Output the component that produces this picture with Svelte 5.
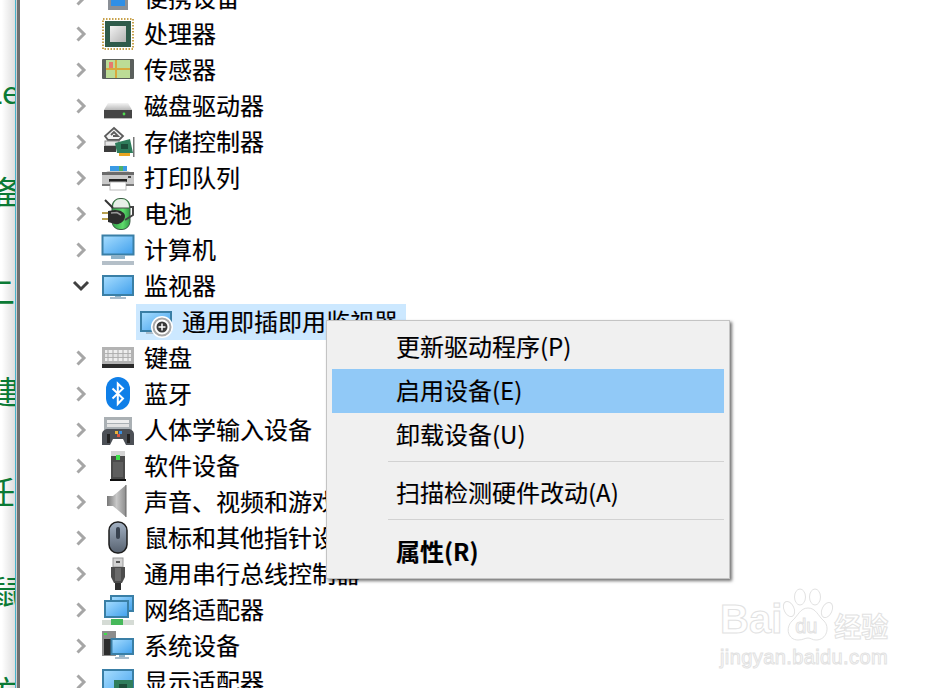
<script>
  const devices = [
    { name: '便携设备', icon: 'portable' },
    { name: '处理器', icon: 'cpu' },
    { name: '传感器', icon: 'sensor' },
    { name: '磁盘驱动器', icon: 'disk' },
    { name: '存储控制器', icon: 'storage' },
    { name: '打印队列', icon: 'printer' },
    { name: '电池', icon: 'battery' },
    { name: '计算机', icon: 'computer' },
    { name: '监视器', icon: 'monitor', open: true, child: '通用即插即用监视器' },
    { name: '键盘', icon: 'keyboard' },
    { name: '蓝牙', icon: 'bluetooth' },
    { name: '人体学输入设备', icon: 'hid' },
    { name: '软件设备', icon: 'software' },
    { name: '声音、视频和游戏控制器', icon: 'speaker' },
    { name: '鼠标和其他指针设备', icon: 'mouse' },
    { name: '通用串行总线控制器', icon: 'usb' },
    { name: '网络适配器', icon: 'network' },
    { name: '系统设备', icon: 'system' },
    { name: '显示适配器', icon: 'display' }
  ];

  // text of the window behind, only a sliver of it shows
  const behind = [
    { text: 'Le', shift: -15 },
    { text: '备', shift: -8 },
    { text: '二', shift: -17 },
    { text: '建', shift: -12 },
    { text: '任', shift: -17 },
    { text: '鼠', shift: -10 },
    { text: '方', shift: -10 }
  ];
</script>

<svg class="defs" width="0" height="0" aria-hidden="true">
  <defs>
    <linearGradient id="screen" x1="0" y1="0" x2="1" y2="1">
      <stop offset="0" stop-color="#a8deff" />
      <stop offset="1" stop-color="#3f9fec" />
    </linearGradient>
    <linearGradient id="chipface" x1="0" y1="0" x2="1" y2="1">
      <stop offset="0" stop-color="#f2f2f2" />
      <stop offset="1" stop-color="#b4b4b4" />
    </linearGradient>
    <linearGradient id="metal" x1="0" y1="0" x2="0" y2="1">
      <stop offset="0" stop-color="#f4f4f4" />
      <stop offset="1" stop-color="#b8b8b8" />
    </linearGradient>
    <linearGradient id="cone" x1="0" y1="0" x2="1" y2="0">
      <stop offset="0" stop-color="#777" />
      <stop offset="0.5" stop-color="#c8c8c8" />
      <stop offset="1" stop-color="#8c8c8c" />
    </linearGradient>
    <linearGradient id="mousebody" x1="0" y1="0" x2="0" y2="1">
      <stop offset="0" stop-color="#a4b2c4" />
      <stop offset="1" stop-color="#56616f" />
    </linearGradient>
    <linearGradient id="charge" x1="0" y1="0" x2="1" y2="0">
      <stop offset="0" stop-color="#2f9a45" />
      <stop offset="0.6" stop-color="#5fdc6c" />
      <stop offset="1" stop-color="#2f9a45" />
    </linearGradient>
  </defs>
</svg>

{#snippet icon(kind)}
  <svg class="icon" viewBox="0 0 32 32" width="32" height="32" aria-hidden="true">
    {#if kind === 'portable'}
      <rect x="6" y="14" width="20" height="14" fill="#8a8f96" />
      <rect x="9" y="17" width="14" height="7" fill="#2f8fe6" />
    {:else if kind === 'cpu'}
      <rect x="1" y="1" width="30" height="30" fill="none" stroke="#c8a24c" stroke-width="2" stroke-dasharray="1.5 1.5" />
      <rect x="3" y="3" width="26" height="26" fill="#2f5b4b" />
      <rect x="8" y="8" width="16" height="16" fill="url(#chipface)" />
    {:else if kind === 'sensor'}
      <rect x="0" y="5" width="32" height="20" rx="1" fill="#5a5f5c" />
      <rect x="4" y="6" width="24" height="18" fill="#bcdc96" />
      <rect x="13" y="6" width="2" height="18" fill="#d8a83c" />
      <rect x="4" y="14" width="24" height="2" fill="#d8a83c" />
      <rect x="7" y="8" width="4" height="6" fill="#e8796f" />
    {:else if kind === 'disk'}
      <path d="M6 13H26L30 20H2Z" fill="url(#metal)" />
      <rect x="2" y="20" width="28" height="8" fill="#454545" />
      <rect x="2" y="28" width="28" height="1" fill="#bbb" />
      <circle cx="22" cy="24" r="1.4" fill="#4fdc4f" />
    {:else if kind === 'storage'}
      <path d="M12 2L21 10L17 14H6L3 10Z" fill="#f4f4f4" stroke="#5c5c5c" stroke-width="1.8" />
      <path d="M9 9L12 6L16 10H11" fill="none" stroke="#5c5c5c" stroke-width="1.8" />
      <rect x="3" y="15" width="14" height="5" fill="#e6e6e6" stroke="#8a8a8a" />
      <rect x="2" y="20" width="12" height="6" fill="#3c3c3c" />
      <path d="M13 17L28 13L31 27H15Z" fill="#2f7d5c" />
      <rect x="19" y="18" width="7" height="5" fill="#1d4d3a" />
      <rect x="17" y="27" width="11" height="3" fill="#eaa520" />
      <rect x="31" y="11" width="1.5" height="20" fill="#777" />
    {:else if kind === 'printer'}
      <rect x="8" y="4" width="17" height="5" fill="#3a9ae4" />
      <rect x="17" y="4" width="4" height="5" fill="#4fb06a" />
      <path d="M6 9H26L32 12V24H0V12Z" fill="#c9c9c9" />
      <rect x="0" y="10" width="32" height="3" fill="#6b6b6b" />
      <rect x="26" y="14" width="3" height="2" fill="#4a4a4a" />
      <rect x="7" y="17" width="18" height="3" fill="#222" />
      <rect x="8" y="20" width="16" height="8" fill="#fff" stroke="#bbb" />
      <rect x="0" y="22" width="8" height="2" fill="#777" />
      <rect x="24" y="22" width="8" height="2" fill="#777" />
    {:else if kind === 'battery'}
      <rect x="10" y="0.5" width="18" height="31" rx="8" fill="url(#charge)" stroke="#3c5a44" stroke-width="1" />
      <path d="M11 10C11 4 14 1 19 1C24 1 27 4 27 10Z" fill="#e8efe8" />
      <path d="M11 10H27" stroke="#4a4a4a" stroke-width="1" />
      <path d="M3 2L11 10" stroke="#333" stroke-width="2" fill="none" />
      <path d="M28 9H31V17L23 22" stroke="#444" stroke-width="2" fill="none" />
      <rect x="0" y="14" width="7" height="2" fill="#b8a050" />
      <rect x="0" y="20" width="7" height="2" fill="#b8a050" />
      <path d="M6 13L13 12C19 12 23 15 23 18C23 22 19 27 13 26L6 24Z" fill="#2c2c2c" />
      <path d="M9 15L15 14.5L19 17" stroke="#999" stroke-width="1.5" fill="none" />
    {:else if kind === 'computer'}
      <rect x="0.5" y="1.5" width="31" height="19" fill="url(#screen)" stroke="#3a7fa6" stroke-width="2" />
      <rect x="9" y="21" width="14" height="4" fill="#8fb2c8" />
      <rect x="0" y="27" width="32" height="4" fill="#b4bfc8" />
    {:else if kind === 'monitor'}
      <rect x="1" y="6" width="30" height="19" fill="url(#screen)" stroke="#3a7fa6" stroke-width="2" />
      <rect x="13" y="26" width="6" height="1" fill="#8fb2c8" />
      <rect x="8" y="27" width="16" height="2" fill="#a9bccb" />
    {:else if kind === 'plugged'}
      <rect x="1" y="6" width="30" height="19" fill="url(#screen)" stroke="#3a7fa6" stroke-width="2" />
      <rect x="6" y="26" width="10" height="2" fill="#a9bccb" />
      <circle cx="22" cy="21" r="11" fill="#fff" />
      <circle cx="22" cy="21" r="8.5" fill="none" stroke="#a8a8a8" stroke-width="2" />
      <circle cx="22" cy="21" r="5.5" fill="#3a3a3a" />
      <path d="M22 17.5V24.5M18.5 21H25.5" stroke="#fff" stroke-width="1.5" />
    {:else if kind === 'keyboard'}
      <rect x="0" y="5" width="32" height="17" fill="#b3b3b3" />
      <rect x="3" y="8" width="26" height="3" fill="#eee" />
      <rect x="3" y="12" width="26" height="3" fill="#e4e4e4" />
      <rect x="3" y="16" width="26" height="3" fill="#eee" />
      <path d="M6 8V19M11 8V19M16 8V19M21 8V19M26 8V19" stroke="#aaa" stroke-width="1" />
      <rect x="0" y="22" width="32" height="4" fill="#2b2b2b" />
    {:else if kind === 'bluetooth'}
      <rect x="4" y="-1" width="24" height="33" rx="12" fill="#0f7fe8" />
      <path d="M10.5 10.5L21 20.5L15.8 26V5.5L21 10.5L10.5 20.5" fill="none" stroke="#fff" stroke-width="2" />
    {:else if kind === 'hid'}
      <rect x="2" y="3" width="28" height="15" fill="#aab0b4" />
      <rect x="5" y="6" width="22" height="3" fill="#eee" />
      <rect x="5" y="10" width="22" height="3" fill="#e2e2e2" />
      <path d="M0 20C0 17 3 15 6 15H26C29 15 32 17 32 20V31H24L21 25H11L8 31H0Z" fill="#4c5056" />
      <rect x="13" y="17" width="3" height="3" fill="#e8b23a" />
      <rect x="17" y="17" width="3" height="3" fill="#3a8fe0" />
      <rect x="15" y="20" width="3" height="3" fill="#d9553f" />
      <rect x="5" y="20" width="3" height="9" fill="#222" />
      <rect x="25" y="20" width="3" height="9" fill="#222" />
    {:else if kind === 'software'}
      <rect x="9" y="1" width="14" height="28" fill="#4a4a4a" />
      <rect x="9" y="1" width="14" height="5" fill="#d4d4d4" />
      <rect x="14" y="5" width="4" height="5" fill="#3ee04a" />
      <rect x="11" y="12" width="10" height="15" fill="#5e5e5e" />
      <rect x="8" y="29" width="16" height="2" fill="#111" />
    {:else if kind === 'speaker'}
      <path d="M5 10H11L24 -1V31L11 20H5Z" fill="url(#cone)" />
      <path d="M24 -1V31" stroke="#666" stroke-width="1" />
    {:else if kind === 'mouse'}
      <rect x="7" y="0" width="18" height="31" rx="8.5" fill="url(#mousebody)" stroke="#1c1c1c" stroke-width="1.5" />
      <rect x="14" y="5" width="4" height="12" rx="2" fill="#38424f" />
    {:else if kind === 'usb'}
      <rect x="11" y="0" width="10" height="9" fill="#d2d2d2" stroke="#9a9a9a" />
      <rect x="14" y="3" width="4" height="2" fill="#555" />
      <path d="M9 9H23V19L20 25H12L9 19Z" fill="#4c4c4c" />
      <rect x="13" y="10" width="6" height="13" fill="#6a6a6a" />
      <rect x="13" y="25" width="6" height="7" fill="#2e2e2e" />
    {:else if kind === 'network'}
      <rect x="9" y="2" width="22" height="15" fill="url(#screen)" stroke="#3a7fa6" stroke-width="2" />
      <rect x="3" y="7" width="23" height="16" fill="url(#screen)" stroke="#3a7fa6" stroke-width="2" />
      <rect x="0" y="26" width="32" height="5" fill="#d5dbd5" />
      <rect x="9" y="25" width="12" height="6" fill="#46b85a" />
    {:else if kind === 'system'}
      <rect x="0" y="1" width="14" height="25" fill="#8c8c8c" />
      <rect x="2" y="3" width="3" height="2" fill="#3ee04a" />
      <rect x="2" y="9" width="9" height="16" fill="#2c2c2c" />
      <rect x="9.5" y="9" width="21.5" height="15" fill="url(#screen)" stroke="#3a7fa6" stroke-width="2" />
      <rect x="17" y="25" width="6" height="2" fill="#8fb2c8" />
      <rect x="13" y="27" width="14" height="2" fill="#a9bccb" />
    {:else if kind === 'display'}
      <rect x="1" y="4" width="30" height="28" fill="url(#screen)" stroke="#3a7fa6" stroke-width="2" />
      <rect x="12" y="14" width="19" height="18" fill="#2f7d5c" />
      <rect x="17" y="18" width="8" height="8" fill="#1d4d3a" />
    {/if}
  </svg>
{/snippet}

<div class="page">
  <div class="sliver">
    <div class="behind">
      {#each behind as line}
        <div class="behind-line"><span style="margin-left: {line.shift}px">{line.text}</span></div>
      {/each}
    </div>
  </div>

  <div class="tree">
    {#each devices as device}
      <div class="row">
        <svg class="arrow" viewBox="0 0 18 18" width="18" height="18" aria-hidden="true">
          {#if device.open}
            <path class="open" d="M2 5L9 12L16 5" />
          {:else}
            <path d="M5.5 2.5L12 9L5.5 15.5" />
          {/if}
        </svg>
        {@render icon(device.icon)}
        <span class="label">{device.name}</span>
      </div>
      {#if device.child}
        <div class="child">
          {@render icon('plugged')}
          <span class="label">{device.child}</span>
        </div>
      {/if}
    {/each}
  </div>

  <div class="menu">
    <div class="item">更新驱动程序(P)</div>
    <div class="item active">启用设备(E)</div>
    <div class="item">卸载设备(U)</div>
    <div class="sep"></div>
    <div class="item">扫描检测硬件改动(A)</div>
    <div class="sep"></div>
    <div class="item strong">属性(R)</div>
  </div>

  <div class="mark">
    <div class="mark-top">
      <span class="bai">Bai</span>
      <span class="paw">
        <svg viewBox="0 0 52 54" width="52" height="54" aria-hidden="true">
          <ellipse cx="7" cy="21" rx="5" ry="8" transform="rotate(-25 7 21)" />
          <ellipse cx="18" cy="9" rx="5.5" ry="8" />
          <ellipse cx="33" cy="9" rx="5.5" ry="8" />
          <ellipse cx="45" cy="22" rx="5" ry="8" transform="rotate(25 45 22)" />
          <path d="M26 20C34 20 36 28 42 33C48 39 45 52 34 52C30 52 29 50 26 50C23 50 21 52 16 52C6 52 3 40 10 33C16 28 18 20 26 20Z" />
        </svg>
        <span class="du">du</span>
      </span>
      <span class="jy">经验</span>
    </div>
    <div class="url">jingyan.baidu.com</div>
  </div>
</div>

<style>
  :global(body) {
    margin: 0;
    background: #fff;
  }

  .defs {
    position: absolute;
  }

  .page {
    position: relative;
    display: flex;
    width: 940px;
    height: 688px;
    overflow: hidden;
    background: #fff;
    font-family: "Noto Sans CJK SC", "Liberation Sans", sans-serif;
    font-size: 24px;
    color: #000;
    text-shadow: 0.4px 0 0 rgba(0, 90, 255, 0.28), -0.4px 0 0 rgba(255, 140, 0, 0.28);
  }

  .sliver {
    flex: none;
    width: 17px;
    height: 688px;
    overflow: hidden;
    border-right: 3px solid #6f6f6f;
    background: linear-gradient(to right, #fff 10%, #d9d9d9 100%);
    position: relative;
  }

  .sliver::after {
    content: '';
    position: absolute;
    top: 0;
    bottom: 0;
    right: 0;
    width: 1px;
    height: 100%;
    background: #d0d0d0;
    border-left: 1px solid #47b3cc;
  }

  .behind {
    padding-top: 40px;
    color: #0b7a35;
    font-size: 32px;
    text-shadow: none;
  }

  .behind-line {
    display: flex;
    align-items: center;
    height: 100px;
    white-space: nowrap;
  }

  .tree {
    flex: 1;
    margin-top: -20px;
  }

  .row {
    display: flex;
    align-items: center;
    height: 36px;
    padding-left: 52px;
  }

  .arrow {
    flex: none;
    margin-right: 12px;
  }

  .arrow path {
    fill: none;
    stroke: #a6a6a6;
    stroke-width: 3;
  }

  .arrow path.open {
    stroke: #404040;
  }

  .icon {
    flex: none;
    overflow: visible;
  }

  .label {
    margin: 0 0 4px 10px;
    white-space: nowrap;
  }

  .child {
    display: inline-flex;
    align-items: center;
    height: 36px;
    margin-left: 116px;
    padding: 0 8px 0 4px;
    background: #cce8ff;
    vertical-align: top;
  }

  .menu {
    position: absolute;
    left: 326px;
    top: 320px;
    width: 392px;
    padding: 4px 5px 4px 5px;
    border: 1px solid #c4c4c4;
    background: #f0f0f0;
    box-shadow: 2px 2px 3px rgba(0, 0, 0, 0.55);
  }

  .item {
    display: flex;
    align-items: center;
    height: 40px;
    padding: 0 0 4px 64px;
    white-space: nowrap;
  }

  .active {
    background: #91c9f7;
  }

  .strong {
    font-weight: 700;
  }

  .sep {
    height: 1px;
    margin: 3.5px 0 10px 56px;
    background: #d2d2d2;
  }

  .mark {
    position: absolute;
    left: 720px;
    top: 586px;
    width: 172px;
    color: #fff;
    text-shadow: none;
    -webkit-text-stroke: 1px #e2e2e2;
  }

  .mark-top {
    display: flex;
    align-items: flex-end;
    height: 56px;
  }

  .bai {
    font: 700 40px/40px "Liberation Sans", sans-serif;
    margin-bottom: 3px;
  }

  .paw {
    position: relative;
    display: block;
    flex: none;
    width: 52px;
    height: 54px;
  }

  .paw svg {
    display: block;
    fill: #fff;
    stroke: #e2e2e2;
    stroke-width: 1;
  }

  .du {
    position: absolute;
    left: 13px;
    top: 27px;
    font: 400 20px/22px "Liberation Sans", sans-serif;
  }

  .jy {
    font: 700 27px/32px "Noto Sans CJK SC", sans-serif;
    margin-bottom: 0;
  }

  .url {
    margin-top: 4px;
    font: 400 20px/22px "Liberation Sans", sans-serif;
    letter-spacing: 0.4px;
    white-space: nowrap;
  }
</style>
